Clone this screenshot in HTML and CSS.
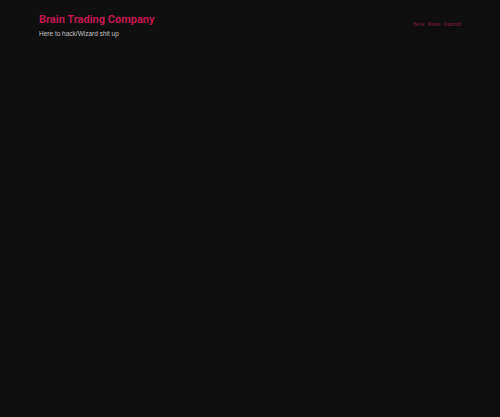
FILE: index.html
```html
<!DOCTYPE html>
<html>
<head>
<meta charset="utf-8">
<link rel="stylesheet" href="styles.css">
</head>
<body>
<header class="site-header">
  <div class="brand">
    <h1 class="title">Brain Trading Company</h1>
    <p class="tagline">Here to hack/Wizard shit up</p>
  </div>
  <nav class="nav">
    <a href="#">Now</a>
    <a href="#">Posts</a>
    <a href="#">Journal</a>
  </nav>
</header>
</body>
</html>
```
FILE: styles.css
```css
html, body {
  margin: 0;
  padding: 0;
  background: #0f0f0f;
  height: 100%;
}
.site-header {
  display: flex;
  justify-content: space-between;
  align-items: flex-start;
  padding: 12px 39px 0 39px;
}
.title {
  margin: 0;
  font-family: Roboto, "Liberation Sans", sans-serif;
  font-weight: 700;
  font-size: 11px;
  line-height: 15px;
  color: #c0174f;
}
.tagline {
  margin: 2px 0 0 0;
  font-family: "Liberation Sans", Arial, sans-serif;
  font-size: 6.5px;
  line-height: 9px;
  color: #c4c4c4;
}
.nav {
  display: flex;
  gap: 3px;
  padding-top: 9px;
}
.nav a {
  font-family: "Liberation Serif", serif;
  font-size: 6px;
  color: #951c43;
  text-decoration: none;
}
```
